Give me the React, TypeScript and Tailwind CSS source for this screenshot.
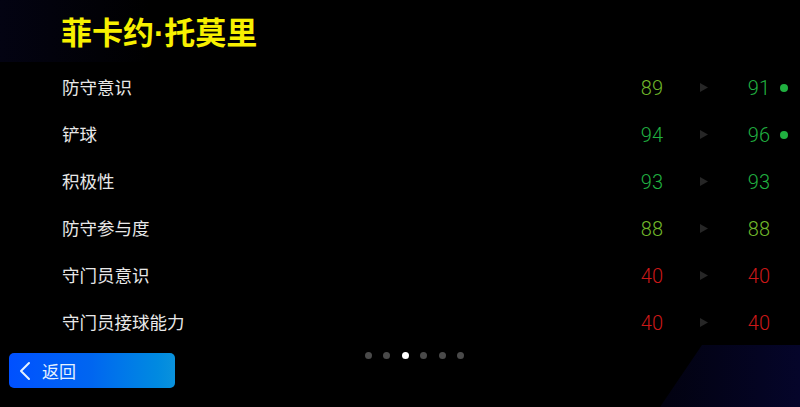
import { ChevronLeft } from 'lucide-react'

const FONT = { fontFamily: '"Noto Sans CJK SC", "Noto Sans", sans-serif' }
const NUM_FONT = { fontFamily: 'Roboto, "Liberation Sans", sans-serif' }

type Stat = { label: string; from: number; to: number; up?: boolean }

const STATS: Stat[] = [
  { label: '防守意识', from: 89, to: 91, up: true },
  { label: '铲球', from: 94, to: 96, up: true },
  { label: '积极性', from: 93, to: 93 },
  { label: '防守参与度', from: 88, to: 88 },
  { label: '守门员意识', from: 40, to: 40 },
  { label: '守门员接球能力', from: 40, to: 40 },
]

function valueColor(v: number) {
  if (v >= 90) return 'text-[#20b040]'
  if (v >= 80) return 'text-[#70b82a]'
  return 'text-[#cc1818]'
}

function StatRow({ s }: { s: Stat }) {
  return (
    <div className="flex h-[47px] items-center pl-[62px] pr-[12px]">
      <span className="flex-1 text-[17.5px] text-[#e8e8e8]">{s.label}</span>
      <span className={`w-[40px] text-right text-[20px] font-light ${valueColor(s.from)}`} style={NUM_FONT}>
        {s.from}
      </span>
      <span className="flex w-[82px] justify-center">
        <svg width="8" height="9" viewBox="0 0 8 9">
          <path d="M0 0 L8 4.5 L0 9 Z" fill="#262626" />
        </svg>
      </span>
      <span className={`w-[25px] text-right text-[20px] font-light ${valueColor(s.to)}`} style={NUM_FONT}>
        {s.to}
      </span>
      <span className="ml-[10px] flex w-[8px] justify-center">
        {s.up && <span className="h-[8px] w-[8px] rounded-full bg-[#20b040]" />}
      </span>
    </div>
  )
}

export default function App() {
  return (
    <div className="relative h-[407px] w-[800px] overflow-hidden bg-black" style={FONT}>
      {/* faint background shapes */}
      <div className="pointer-events-none absolute left-0 top-0 h-[62px] w-[150px] bg-gradient-to-r from-[#030312] to-transparent" />
      <div
        className="pointer-events-none absolute bottom-0 right-0 h-[62px] w-[140px] bg-gradient-to-r from-[#020210] to-[#05052a]"
        style={{ clipPath: 'polygon(30% 0, 100% 0, 100% 100%, 0 100%)' }}
      />

      <div className="relative flex flex-col">
        <div className="flex h-[64px] items-center pl-[61px] pb-[1px]">
          <h1 className="text-[31px] font-bold leading-none text-[#f7f000]">
            菲卡约<span style={{ fontFamily: '"Liberation Sans", sans-serif' }}>·</span>托莫里
          </h1>
        </div>

        <div className="flex flex-col">
          {STATS.map((s) => (
            <StatRow key={s.label} s={s} />
          ))}
        </div>

        <div className="mt-[7px] flex items-start">
          <button className="ml-[9px] flex h-[35px] w-[166px] items-center rounded-[5px] bg-gradient-to-r from-[#0050ff] via-[#0066f0] to-[#0a92dc] text-[#e6f2ff]">
            <ChevronLeft size={32} strokeWidth={1.5} />
            <span className="ml-[1px] text-[17px]">返回</span>
          </button>
          <div className="ml-[190px] mt-[-1px] flex gap-[11.4px]">
            {[0, 1, 2, 3, 4, 5].map((i) => (
              <span
                key={i}
                className={`h-[7px] w-[7px] rounded-full ${i === 2 ? 'bg-white' : 'bg-[#4a4a4a]'}`}
              />
            ))}
          </div>
        </div>
      </div>
    </div>
  )
}
